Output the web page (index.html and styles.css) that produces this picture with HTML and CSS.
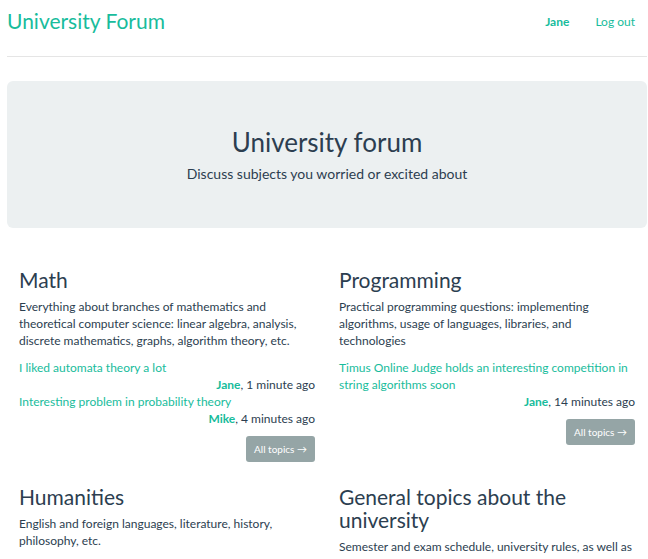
FILE: index.html
```html
<!DOCTYPE html>
<html>
<head>
<meta charset="utf-8">
<link rel="stylesheet" href="styles.css">
</head>
<body>
<div class="page">
  <header class="topbar">
    <a class="brand" href="#">University Forum</a>
    <nav class="nav">
      <a class="nav-link user" href="#">Jane</a>
      <a class="nav-link" href="#">Log out</a>
    </nav>
  </header>

  <section class="hero">
    <h1 class="hero-title">University forum</h1>
    <p class="hero-lead">Discuss subjects you worried or excited about</p>
  </section>

  <main class="grid">
    <section class="cat">
      <h2 class="cat-title">Math</h2>
      <p class="cat-desc">Everything about branches of mathematics and theoretical computer science: linear algebra, analysis, discrete mathematics, graphs, algorithm theory, etc.</p>
      <div class="topic">
        <a class="topic-link" href="#">I liked automata theory a lot</a>
        <div class="topic-meta"><a class="author" href="#">Jane</a>, 1 minute ago</div>
      </div>
      <div class="topic">
        <a class="topic-link" href="#">Interesting problem in probability theory</a>
        <div class="topic-meta"><a class="author" href="#">Mike</a>, 4 minutes ago</div>
      </div>
      <div class="actions"><a class="btn" href="#">All topics →</a></div>
    </section>

    <section class="cat">
      <h2 class="cat-title">Programming</h2>
      <p class="cat-desc">Practical programming questions: implementing algorithms, usage of languages, libraries, and technologies</p>
      <div class="topic">
        <a class="topic-link" href="#">Timus Online Judge holds an interesting competition in string algorithms soon</a>
        <div class="topic-meta"><a class="author" href="#">Jane</a>, 14 minutes ago</div>
      </div>
      <div class="actions"><a class="btn" href="#">All topics →</a></div>
    </section>

    <section class="cat">
      <h2 class="cat-title">Humanities</h2>
      <p class="cat-desc">English and foreign languages, literature, history, philosophy, etc.</p>
    </section>

    <section class="cat">
      <h2 class="cat-title">General topics about the university</h2>
      <p class="cat-desc">Semester and exam schedule, university rules, as well as anything else related to university life.</p>
    </section>
  </main>
</div>
</body>
</html>
```

FILE: styles.css
```css
* { box-sizing: border-box; }
html, body { margin: 0; padding: 0; }
body {
  font-family: Lato, "Open Sans", sans-serif;
  color: #2c3e50;
  font-size: 12px;
  line-height: 17px;
  background: #fff;
}
a { text-decoration: none; color: #18bc9c; }
.page { padding: 0 1px 0 7px; }
.topbar {
  display: flex;
  justify-content: space-between;
  align-items: center;
  height: 57px;
  border-bottom: 1px solid #e5e5e5;
  padding-bottom: 14px;
}
.brand { font-size: 21px; line-height: 28px; color: #18bc9c; }
.nav { display: flex; }
.nav-link { padding: 0 12px; font-size: 12px; }
.nav-link.user { font-weight: 700; margin-right: 2px; }
.hero {
  margin-top: 24px;
  background: #ecf0f1;
  border-radius: 6px;
  padding: 46px 16px 44px;
  text-align: center;
}
.hero-title { margin: 0 0 7px; font-size: 26px; line-height: 30px; font-weight: 400; }
.hero-lead { margin: 0; font-size: 14px; line-height: 20px; }
.grid {
  display: grid;
  grid-template-columns: 1fr 1fr;
  padding-top: 40px;
}
.cat { padding: 0 12px 23px; }
.cat-title { margin: 0 0 7px; font-size: 21px; line-height: 23px; font-weight: 400; }
.cat-desc { margin: 0 0 10px; }
.topic-link { display: block; }
.topic-meta { text-align: right; }
.author { font-weight: 700; }
.actions { display: flex; justify-content: flex-end; margin-top: 9px; }
.btn {
  background: #95a5a6;
  color: #fff;
  font-size: 10px;
  line-height: 16px;
  padding: 5px 8px;
  border-radius: 3px;
}
```
